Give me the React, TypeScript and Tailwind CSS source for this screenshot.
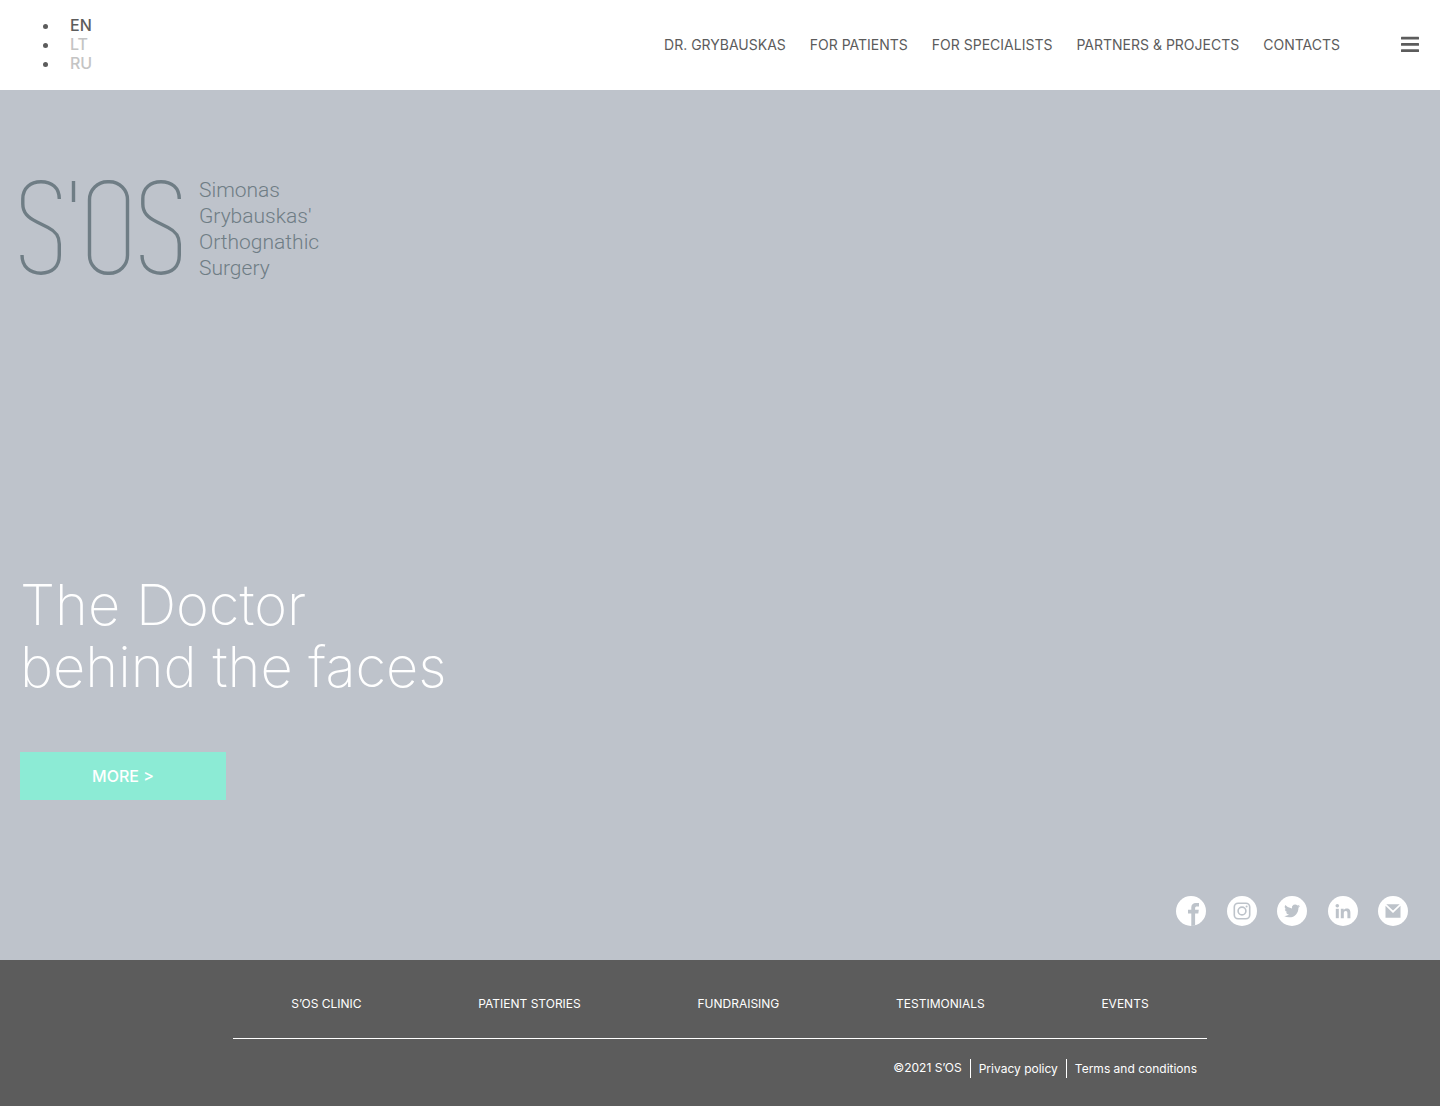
import React from 'react';

const languages = [
    { code: 'EN', active: true },
    { code: 'LT', active: false },
    { code: 'RU', active: false },
];

const mainLinks = ['DR. GRYBAUSKAS', 'FOR PATIENTS', 'FOR SPECIALISTS', 'PARTNERS & PROJECTS', 'CONTACTS'];

const footerLinks = ['S’OS CLINIC', 'PATIENT STORIES', 'FUNDRAISING', 'TESTIMONIALS', 'EVENTS'];

const Header = () => (
    <header className="flex h-[90px] items-center justify-between bg-white pr-5 text-[#5c5c5c]">
        <ul className="list-disc pb-0.5 pl-[60px] text-base leading-[19px] font-medium">
            {languages.map((lang) => (
                <li key={lang.code} className="pl-[10px]">
                    <a href="#" className={lang.active ? 'text-[#5c5c5c]' : 'text-[#c4c4c4]'}>
                        {lang.code}
                    </a>
                </li>
            ))}
        </ul>
        <div className="flex items-center gap-[60px]">
            <nav className="flex gap-6 text-sm">
                {mainLinks.map((link) => (
                    <a key={link} href="#">{link}</a>
                ))}
            </nav>
            <button aria-label="Menu" className="h-5 w-5">
                <svg viewBox="0 0 20 20" className="h-5 w-5" fill="#5c5c5c">
                    <rect x="1" y="1.8" width="18" height="2.8" rx="0.5" />
                    <rect x="1" y="8" width="18" height="2.8" rx="0.5" />
                    <rect x="1" y="14.2" width="18" height="2.8" rx="0.5" />
                </svg>
            </button>
        </div>
    </header>
);

const Logo = () => (
    <a href="#" className="flex items-start gap-[17px] text-[#6f7d85]">
        <svg viewBox="0 0 162 96" className="h-24 w-[162px]" fill="none" stroke="currentColor" strokeWidth="3.4">
            <path d="M39.3 19C39.3 7.5 31.5 1.8 21 1.8S2.8 8 2.8 19V24C2.8 33 8 37.5 17 42L28 47.5C36 51.5 39.3 56 39.3 64V75C39.3 87 32 93.2 21 93.2S2 87 2 75" />
            <path d="M53.5 1V22" />
            <rect x="69.5" y="1.8" width="38" height="91.4" rx="18" />
            <path d="M159.3 19C159.3 7.5 151.5 1.8 141 1.8S122.8 8 122.8 19V24C122.8 33 128 37.5 137 42L148 47.5C156 51.5 159.3 56 159.3 64V75C159.3 87 152 93.2 141 93.2S122 87 122 75" />
        </svg>
        <span className="-mt-[3px] font-['Roboto',sans-serif] text-[21px] leading-[26px] font-light">
            Simonas<br />
            Grybauskas'<br />
            Orthognathic<br />
            Surgery
        </span>
    </a>
);

const SocialLinks = () => (
    <div className="flex w-[232px] justify-between">
        <a href="#" aria-label="Facebook">
            <svg viewBox="0 0 30 30" className="h-[30px] w-[30px]">
                <circle cx="15" cy="15" r="15" fill="#fff" />
                <path d="M15.3 30V17.6H12V13.8H15.3V11.6C15.3 8.5 17.1 7 19.9 7H23V10.4H21C19.6 10.4 19.1 11 19.1 12.2V13.8H22.8L22.3 17.6H19.1V29.4Z" fill="#bdc3ca" />
            </svg>
        </a>
        <a href="#" aria-label="Instagram">
            <svg viewBox="0 0 30 30" className="h-[30px] w-[30px]" fill="none" stroke="#bdc3ca" strokeWidth="1.6">
                <circle cx="15" cy="15" r="15" fill="#fff" stroke="none" />
                <rect x="7.3" y="7.3" width="15.4" height="15.4" rx="3.8" />
                <circle cx="15" cy="15" r="3.9" />
                <circle cx="19.6" cy="10.4" r="1" fill="#bdc3ca" stroke="none" />
            </svg>
        </a>
        <a href="#" aria-label="Twitter">
            <svg viewBox="0 0 30 30" className="h-[30px] w-[30px]">
                <circle cx="15" cy="15" r="15" fill="#fff" />
                <path transform="translate(7.2 7) scale(0.66)" fill="#bdc3ca" d="M23.95 4.57a10 10 0 0 1-2.82.78 4.96 4.96 0 0 0 2.16-2.73c-.95.56-2 .96-3.13 1.19a4.92 4.92 0 0 0-8.38 4.48A13.93 13.93 0 0 1 1.64 3.16a4.92 4.92 0 0 0 1.52 6.57 4.9 4.9 0 0 1-2.23-.61v.06a4.92 4.92 0 0 0 3.95 4.83 5 5 0 0 1-2.21.08 4.94 4.94 0 0 0 4.6 3.42A9.87 9.87 0 0 1 0 19.54a13.99 13.99 0 0 0 7.55 2.21c9.05 0 14-7.5 14-13.98 0-.21 0-.42-.02-.63a9.94 9.94 0 0 0 2.46-2.55z" />
            </svg>
        </a>
        <a href="#" aria-label="LinkedIn">
            <svg viewBox="0 0 30 30" className="h-[30px] w-[30px]" fill="#bdc3ca">
                <circle cx="15" cy="15" r="15" fill="#fff" />
                <circle cx="9.3" cy="9.7" r="1.8" />
                <rect x="7.8" y="12.8" width="3" height="9.4" />
                <path d="M12.8 12.8H15.7V14.1C16.2 13.2 17.3 12.5 18.8 12.5C21.7 12.5 22.4 14.4 22.4 17V22.2H19.4V17.6C19.4 16.4 19.3 15.1 17.7 15.1C16.1 15.1 15.8 16.3 15.8 17.5V22.2H12.8Z" />
            </svg>
        </a>
        <a href="#" aria-label="Email">
            <svg viewBox="0 0 30 30" className="h-[30px] w-[30px]" fill="#bdc3ca">
                <circle cx="15" cy="15" r="15" fill="#fff" />
                <path d="M8.3 8.3H21.7L15 14.6Z" />
                <path d="M7.5 9.8L15 16.9L22.5 9.8V21.7H7.5Z" />
            </svg>
        </a>
    </div>
);

const Hero = () => (
    <main className="flex flex-col items-start bg-[#bec3cb] pt-[90px] pr-8 pb-[34px] pl-5">
        <Logo />
        <h1 className="mt-[293px] text-[56px] leading-[62px] font-extralight text-white">
            The Doctor<br />
            behind the faces
        </h1>
        <button className="mt-[54px] h-12 w-[206px] bg-[#8cebd5] text-base font-medium text-white">
            MORE &gt;
        </button>
        <div className="mt-24 flex w-full justify-end">
            <SocialLinks />
        </div>
    </main>
);

const Footer = () => (
    <footer className="bg-[#5c5c5c] px-5 pt-[35px] pb-7 text-xs text-white">
        <div className="mx-auto max-w-[974px]">
            <nav className="flex justify-around border-b border-white pb-[25px] leading-[18px]">
                {footerLinks.map((link) => (
                    <a key={link} href="#">{link}</a>
                ))}
            </nav>
            <div className="mt-5 flex justify-end pr-[10px] leading-[19px]">
                <span className="pr-2 leading-[17px]">©2021 S’OS</span>
                <a href="#" className="border-l border-white px-2">Privacy policy</a>
                <a href="#" className="border-l border-white pl-2">Terms and conditions</a>
            </div>
        </div>
    </footer>
);

const App = () => (
    <div className="font-['Inter',sans-serif]">
        <Header />
        <Hero />
        <Footer />
    </div>
);

export default App;
